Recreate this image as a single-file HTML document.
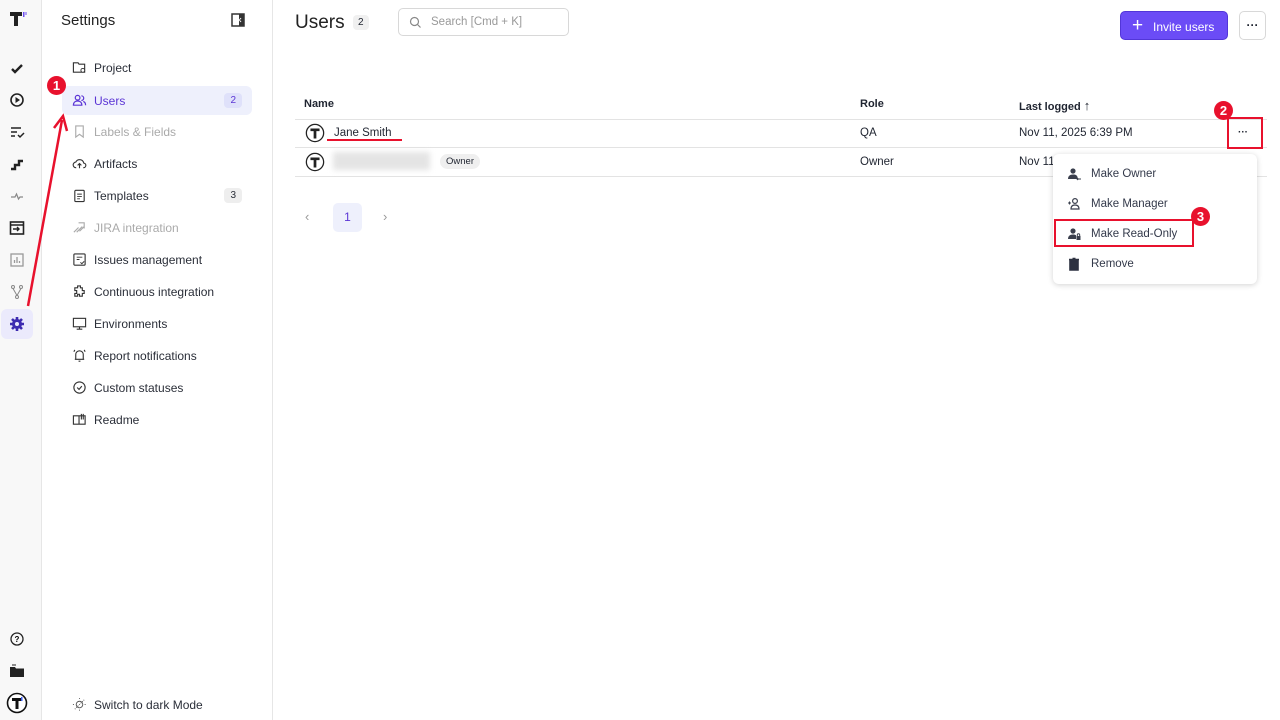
<!DOCTYPE html>
<html><head><meta charset="utf-8"><style>
*{box-sizing:border-box;margin:0;padding:0}
body{width:1280px;height:720px;overflow:hidden;background:#fff;font-family:"Liberation Sans",sans-serif;color:#1f2430;position:relative;font-size:12px}
.rail{position:absolute;left:0;top:0;width:42px;height:720px;background:#f8f8f8;border-right:1px solid #e6e6e6}
.side{position:absolute;left:42px;top:0;width:231px;height:720px;background:#fff;border-right:1px solid #e6e6e6}
.ri{position:absolute;left:9px;width:16px;height:16px}
.item{position:absolute;left:20px;width:190px;height:29px;display:flex;align-items:center;padding-left:10px;font-size:12px;color:#2a2e38}
.item svg{width:15px;height:15px;margin-right:7px;flex:none}
.dis{color:#aaa}
.badge{position:absolute;right:10px;top:7px;background:#eee;border-radius:4px;font-size:10px;padding:2px 6px}
.abs{position:absolute}
.th{position:absolute;top:98px;font-weight:bold;font-size:11px}
.menu div{display:flex;align-items:center;height:30px;padding-left:14px;font-size:11.5px;color:#33394a}
.menu svg{width:14px;height:14px;margin-right:10px}
.red{position:absolute;border:2px solid #e8112d}
.num{position:absolute;width:19px;height:19px;border-radius:50%;background:#e8112d;color:#fff;font-weight:bold;font-size:13px;text-align:center;line-height:19px}
</style></head><body>
<div class="rail">
<svg class="abs" style="left:9px;top:11px" width="18" height="16" viewBox="0 0 18 16"><path d="M1 1h12v4H9v10H5V5H1z" fill="#222"/><rect x="14" y="1" width="1.5" height="5" fill="#6b4df0"/><rect x="16.5" y="1" width="1" height="3" fill="#6b4df0"/></svg>
<svg class="ri" style="top:61px" viewBox="0 0 16 16"><path d="M3 8l3 3 7-7" stroke="#222" stroke-width="2.4" fill="none"/></svg>
<svg class="ri" style="top:92px" viewBox="0 0 16 16"><circle cx="8" cy="8" r="6" stroke="#222" stroke-width="1.6" fill="none"/><path d="M6.5 5v6l4.5-3z" fill="#222"/></svg>
<svg class="ri" style="top:124px" viewBox="0 0 16 16"><path d="M2 4h10M2 8h6M2 12h4M9 11l2 2 4-4" stroke="#222" stroke-width="1.5" fill="none"/></svg>
<svg class="ri" style="top:156px" viewBox="0 0 16 16"><path d="M2 13h4V9h4V5h4" stroke="#222" stroke-width="2.4" fill="none"/></svg>
<svg class="ri" style="top:188px" viewBox="0 0 16 16"><path d="M2 9h4l1.5-3 2 5 1.5-2h3" stroke="#888" stroke-width="1.2" fill="none"/></svg>
<svg class="ri" style="top:220px" viewBox="0 0 16 16"><rect x="1.5" y="2" width="13" height="12" stroke="#222" stroke-width="1.6" fill="none"/><path d="M1.5 5h13M4 9h6M8 7l2 2-2 2" stroke="#222" stroke-width="1.4" fill="none"/></svg>
<svg class="ri" style="top:252px" viewBox="0 0 16 16"><rect x="2" y="2" width="12" height="12" stroke="#999" stroke-width="1.3" fill="none"/><path d="M5.5 11V8M8 11V5M10.5 11V9" stroke="#999" stroke-width="1.3"/></svg>
<svg class="ri" style="top:284px" viewBox="0 0 16 16"><circle cx="4" cy="3" r="1.5" stroke="#888" fill="none"/><circle cx="12" cy="3" r="1.5" stroke="#888" fill="none"/><circle cx="8" cy="13" r="1.5" stroke="#888" fill="none"/><path d="M4 4.5l4 7M12 4.5l-4 7" stroke="#888"/></svg>
<div class="abs" style="left:1px;top:309px;width:32px;height:30px;background:#ebeafc;border-radius:6px"></div>
<svg class="ri" style="top:316px" viewBox="0 0 16 16"><circle cx="8" cy="8" r="5" fill="#3d2bb0"/><circle cx="8" cy="8" r="2" fill="#ebeafc"/><path d="M8 1v3M8 12v3M1 8h3M12 8h3M3 3l2 2M11 11l2 2M13 3l-2 2M3 13l2-2" stroke="#3d2bb0" stroke-width="2.6"/></svg>
<svg class="ri" style="top:631px" viewBox="0 0 16 16"><circle cx="8" cy="8" r="6" stroke="#222" stroke-width="1.3" fill="none"/><text x="8" y="11" font-size="8" text-anchor="middle" font-family="Liberation Sans" font-weight="bold">?</text></svg>
<svg class="ri" style="top:663px" viewBox="0 0 16 16"><path d="M1 4h5l1 1.5h8V14H1z" fill="#222"/><path d="M3 2h4" stroke="#222"/></svg>
<svg class="ri" style="left:6px;top:692px;width:22px;height:22px" viewBox="0 0 22 22"><circle cx="11" cy="11" r="9.5" stroke="#111" stroke-width="1.6" fill="#fff"/><path d="M6 6h10v3h-3.5v8h-3V9H6z" fill="#111"/><rect x="15" y="5" width="1.5" height="4" fill="#3a5bf0"/></svg>
</div>
<div class="side">
<div class="abs" style="left:19px;top:12px;font-size:15px;color:#222">Settings</div>
<svg class="abs" style="left:189px;top:13px" width="14" height="14" viewBox="0 0 14 14"><rect x="1" y="1" width="12" height="12" stroke="#333" stroke-width="1.5" fill="none"/><rect x="8" y="1" width="5" height="12" fill="#333"/><path d="M10 5l-1.5 2 1.5 2" stroke="#fff"/></svg>
<div class="item" style="top:53px"><svg viewBox="0 0 16 16"><path d="M1.5 3h5l1 1.5h6V13h-12z" stroke="#333" stroke-width="1.2" fill="none"/><circle cx="11.5" cy="11" r="2" stroke="#333" fill="#fff"/></svg>Project</div>
<div class="item" style="top:86px;background:#eef0fc;border-radius:6px;color:#5b35d5"><svg viewBox="0 0 16 16"><circle cx="6" cy="5" r="2.5" stroke="#5b35d5" stroke-width="1.3" fill="none"/><path d="M1.5 13c0-3 2-4.5 4.5-4.5s4.5 1.5 4.5 4.5zM10 3a2.5 2.5 0 010 5M12 9c1.5.5 2.5 2 2.5 4" stroke="#5b35d5" stroke-width="1.3" fill="none"/></svg>Users<span class="badge" style="background:#dfe1fa;color:#5b35d5">2</span></div>
<div class="item dis" style="top:117px"><svg viewBox="0 0 16 16"><path d="M4 2h8v12l-4-3-4 3z" stroke="#aaa" stroke-width="1.2" fill="none"/></svg>Labels &amp; Fields</div>
<div class="item" style="top:149px"><svg viewBox="0 0 16 16"><path d="M4.5 12.5a3 3 0 01-.5-6 4.5 4.5 0 018.5 1 2.5 2.5 0 01-.5 5M8 13V8M6 10l2-2 2 2" stroke="#333" stroke-width="1.2" fill="none"/></svg>Artifacts</div>
<div class="item" style="top:181px"><svg viewBox="0 0 16 16"><rect x="3" y="2.5" width="10" height="12" rx="1" stroke="#333" stroke-width="1.2" fill="none"/><path d="M5.5 6.5h5M5.5 9h5M5.5 11.5h3" stroke="#333"/></svg>Templates<span class="badge">3</span></div>
<div class="item dis" style="top:213px"><svg viewBox="0 0 16 16"><path d="M2 13l5-5M5 13l6-6M8 12l5-5M7 3h6v6" stroke="#aaa" stroke-width="1.2" fill="none"/></svg>JIRA integration</div>
<div class="item" style="top:245px"><svg viewBox="0 0 16 16"><rect x="2" y="2" width="12" height="12" rx="1" stroke="#333" stroke-width="1.2" fill="none"/><path d="M5 5.5h6M5 8h3M9 11l1.5 1.5L13 10" stroke="#333" fill="none"/></svg>Issues management</div>
<div class="item" style="top:277px"><svg viewBox="0 0 16 16"><path d="M6 2h3v2h2v3h2v3h-2v3H8v-2H6v2H3v-3h2V7H3V4h3z" stroke="#333" stroke-width="1.2" fill="none"/></svg>Continuous integration</div>
<div class="item" style="top:309px"><svg viewBox="0 0 16 16"><rect x="1.5" y="2.5" width="13" height="9" stroke="#333" stroke-width="1.2" fill="none"/><path d="M8 11.5v2.5M5 14h6" stroke="#333" stroke-width="1.2"/></svg>Environments</div>
<div class="item" style="top:341px"><svg viewBox="0 0 16 16"><path d="M4 12V7a4 4 0 018 0v5zM3 12h10M7 14h2M2 4l1-2M14 4l-1-2" stroke="#333" stroke-width="1.2" fill="none"/></svg>Report notifications</div>
<div class="item" style="top:373px"><svg viewBox="0 0 16 16"><circle cx="8" cy="8" r="6" stroke="#333" stroke-width="1.2" fill="none"/><path d="M5.5 8l2 2 3-3.5" stroke="#333" stroke-width="1.2" fill="none"/></svg>Custom statuses</div>
<div class="item" style="top:405px"><svg viewBox="0 0 16 16"><path d="M1.5 4h6v9h-6zM8 4h6v9H8M10 2v6M12 2v6" stroke="#333" stroke-width="1.2" fill="none"/></svg>Readme</div>
<div class="item" style="top:690px"><svg viewBox="0 0 16 16"><circle cx="8" cy="8" r="3.5" stroke="#555" fill="none"/><path d="M3 13L13 3M8 1v1.5M8 13.5V15M1 8h1.5M13.5 8H15" stroke="#555" stroke-dasharray="1 1.2"/></svg>Switch to dark Mode</div>
</div>
<!-- main -->
<div class="abs" style="left:295px;top:12px;font-size:19px;color:#222">Users</div>
<div class="abs" style="left:353px;top:15px;background:#f0f0f0;border-radius:4px;font-size:10px;padding:2px 5px">2</div>
<div class="abs" style="left:398px;top:8px;width:171px;height:28px;border:1px solid #d8d8d8;border-radius:5px;color:#999;font-size:11.5px;padding:7px 0 0 32px">Search [Cmd + K]<svg class="abs" style="left:10px;top:7px" width="13" height="13" viewBox="0 0 13 13"><circle cx="5.5" cy="5.5" r="4" stroke="#888" stroke-width="1.2" fill="none"/><path d="M8.5 8.5l3 3" stroke="#888" stroke-width="1.2"/></svg></div>
<div class="abs" style="left:1120px;top:11px;width:108px;height:29px;background:#6b4cf6;border:1px solid #5236d8;border-radius:5px;color:#fff;font-size:12px;padding:8px 0 0 32px">Invite users<span class="abs" style="left:11px;top:3px;font-size:19px;line-height:22px">+</span></div>
<div class="abs" style="left:1239px;top:11px;width:27px;height:29px;border:1px solid #d8d8d8;border-radius:5px;text-align:center;font-weight:bold;line-height:26px">···</div>
<div class="th" style="left:304px">Name</div><div class="th" style="left:860px">Role</div><div class="th" style="left:1019px">Last logged <span style="font-size:13px">↑</span></div>
<div class="abs" style="left:295px;top:119px;width:972px;height:1px;background:#e3e3e3"></div>
<div class="abs" style="left:295px;top:147px;width:972px;height:1px;background:#e3e3e3"></div>
<div class="abs" style="left:295px;top:176px;width:972px;height:1px;background:#e3e3e3"></div>
<svg class="abs" style="left:305px;top:123px" width="20" height="20" viewBox="0 0 22 22"><circle cx="11" cy="11" r="9.5" stroke="#222" stroke-width="1.4" fill="#fff"/><path d="M6 6h10v3h-3.5v8h-3V9H6z" fill="#222"/></svg>
<svg class="abs" style="left:305px;top:152px" width="20" height="20" viewBox="0 0 22 22"><circle cx="11" cy="11" r="9.5" stroke="#222" stroke-width="1.4" fill="#fff"/><path d="M6 6h10v3h-3.5v8h-3V9H6z" fill="#222"/></svg>
<div class="abs" style="left:334px;top:127px;font-size:11.5px">Jane Smith</div>
<div class="abs" style="left:327px;top:139px;width:75px;height:2px;background:#e8112d"></div>
<div class="abs" style="left:333px;top:152px;width:97px;height:18px;background:#e4e4e4;filter:blur(3px)"></div>
<div class="abs" style="left:440px;top:154px;background:#efefef;border-radius:8px;font-size:9.5px;padding:2px 6px">Owner</div>
<div class="abs" style="left:860px;top:127px;font-size:11.5px">QA</div>
<div class="abs" style="left:860px;top:156px;font-size:11.5px">Owner</div>
<div class="abs" style="left:1019px;top:127px;font-size:11.5px">Nov 11, 2025 6:39 PM</div>
<div class="abs" style="left:1019px;top:156px;font-size:11.5px">Nov 11</div>
<div class="abs" style="left:1238px;top:127px;font-weight:bold;font-size:10px">···</div>
<div class="red" style="left:1227px;top:117px;width:36px;height:32px"></div>
<div class="num" style="left:1214px;top:101px">2</div>
<div class="abs" style="left:305px;top:209px;color:#999;font-size:13px">‹</div>
<div class="abs" style="left:333px;top:203px;width:29px;height:29px;background:#eef0fc;border-radius:5px;color:#5b35d5;text-align:center;line-height:29px;font-size:12px">1</div>
<div class="abs" style="left:383px;top:209px;color:#999;font-size:13px">›</div>
<div class="abs menu" style="left:1053px;top:154px;width:204px;height:130px;background:#fff;border-radius:6px;box-shadow:0 1px 6px rgba(0,0,0,.18);padding-top:5px">
<div><svg viewBox="0 0 14 14"><circle cx="6" cy="4" r="2.6" fill="#3a3f4d"/><path d="M1 12c0-3 2-4.5 5-4.5s4 1 4.5 2.5V12z" fill="#3a3f4d"/><path d="M10 12h4M11 11l-1 1 1 1" stroke="#3a3f4d"/></svg>Make Owner</div>
<div><svg viewBox="0 0 14 14"><circle cx="8" cy="4" r="2.4" stroke="#3a3f4d" stroke-width="1.2" fill="none"/><path d="M4 12c0-3 2-4 4-4s4 1 4 4z" stroke="#3a3f4d" stroke-width="1.2" fill="none"/><path d="M1 6h3M2.5 4.5v3" stroke="#3a3f4d"/></svg>Make Manager</div>
<div><svg viewBox="0 0 14 14"><circle cx="6" cy="4" r="2.6" fill="#3a3f4d"/><path d="M1 12c0-3 2-4.5 5-4.5 1.5 0 2.5.3 3 .8V12z" fill="#3a3f4d"/><rect x="9.5" y="9" width="4" height="4" fill="#3a3f4d"/><path d="M10.3 9V8a1.2 1.2 0 012.4 0v1" stroke="#3a3f4d" fill="none"/></svg>Make Read-Only</div>
<div><svg viewBox="0 0 14 14"><path d="M3 4h8v9H3zM2 2.5h10M5.5 1.5h3" stroke="#2d3140" stroke-width="1.6" fill="#2d3140"/></svg>Remove</div>
</div>
<div class="red" style="left:1054px;top:219px;width:140px;height:28px"></div>
<div class="num" style="left:1191px;top:207px">3</div>
<svg class="abs" style="left:0;top:0" width="120" height="340"><path d="M28 306L62 120" stroke="#e8112d" stroke-width="2.5" fill="none"/><path d="M54 128L63 116 67 131" stroke="#e8112d" stroke-width="2.5" fill="none"/></svg>
<div class="num" style="left:47px;top:76px">1</div>
</body></html>
